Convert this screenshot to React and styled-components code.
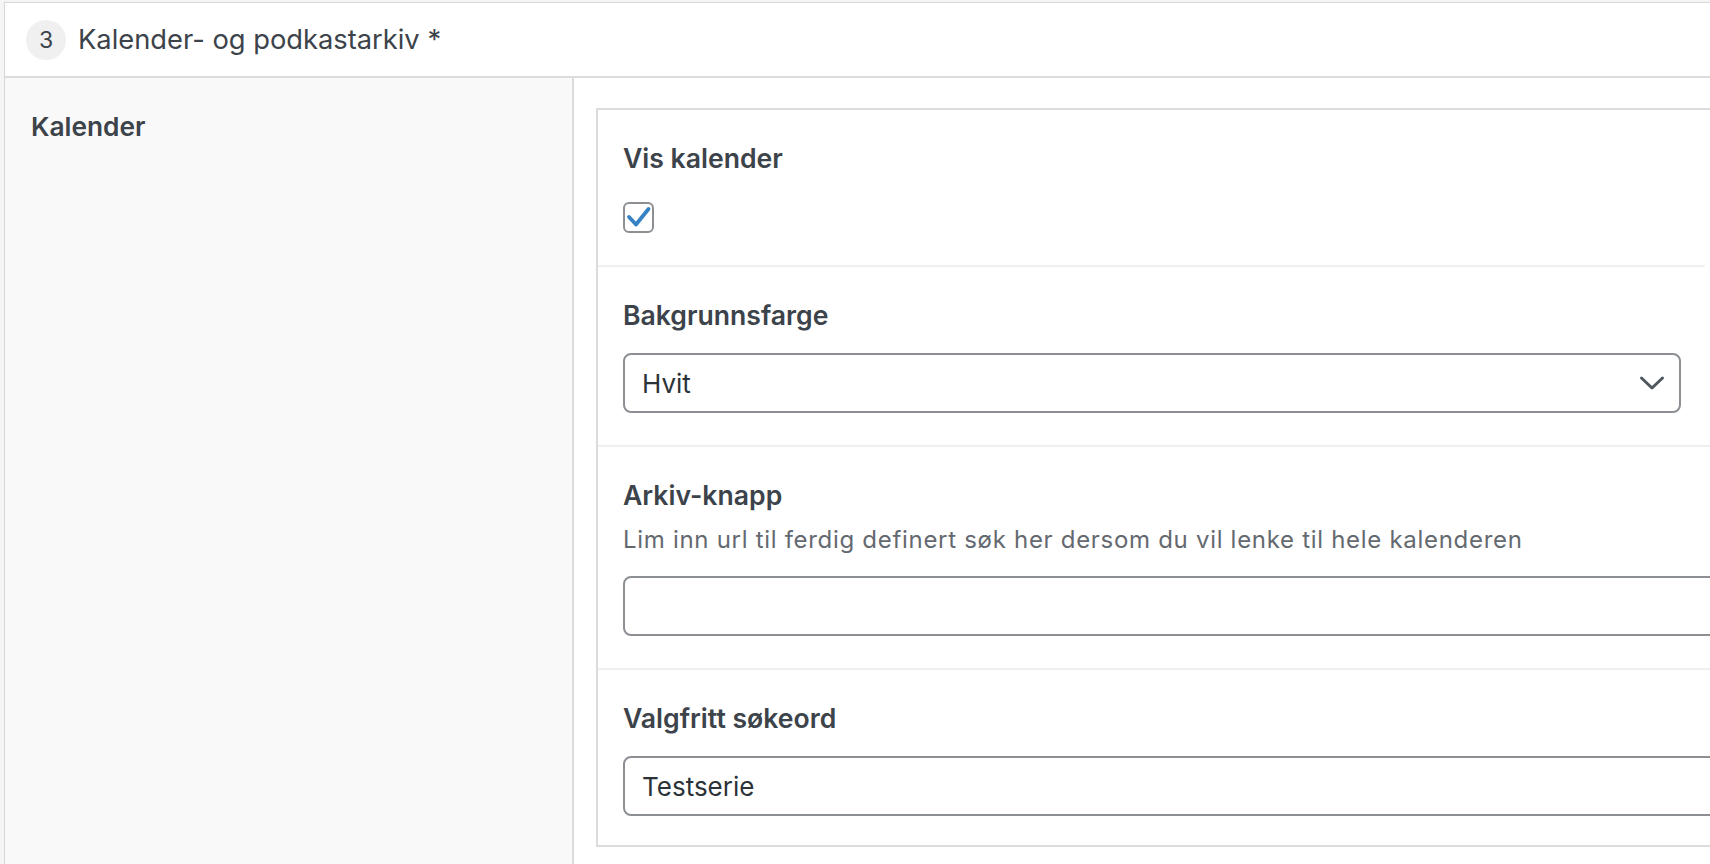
import React from "react";
import styled, { createGlobalStyle } from "styled-components";

const GlobalStyle = createGlobalStyle`
  html, body {
    margin: 0;
    padding: 0;
    background: #f5f5f6;
    overflow: hidden;
  }
  body {
    font-family: Inter, "Noto Sans", "Liberation Sans", sans-serif;
    color: #3c434a;
  }
  * { box-sizing: border-box; }
`;

const Frame = styled.div`
  margin: 2px 0 0 4px;
  min-height: calc(100vh - 2px);
  display: flex;
  flex-direction: column;
  background: #fff;
  border-top: 1px solid #d6d7d9;
  border-left: 1px solid #d6d7d9;
`;

const Header = styled.div`
  height: 75px;
  display: flex;
  align-items: center;
  gap: 12px;
  padding-left: 21px;
  border-bottom: 2px solid #dcdcde;
`;

const Badge = styled.span`
  width: 40px;
  height: 40px;
  border-radius: 50%;
  background: #f0f0f1;
  display: flex;
  align-items: center;
  justify-content: center;
  font-size: 23px;
  color: #3c434a;
`;

const Title = styled.h2`
  margin: 0;
  font-size: 27.3px;
  font-weight: 400;
  color: #3c434a;
`;

const Body = styled.div`
  flex: 1;
  display: grid;
  grid-template-columns: 569px 1fr;
`;

const Aside = styled.div`
  background: #f9f9f9;
  border-right: 2px solid #dcdcde;
  padding: 31px 26px;
`;

const SectionLabel = styled.div`
  font-size: 26.3px;
  line-height: 36px;
  font-weight: 600;
  color: #3c434a;
`;

const Main = styled.div`
  padding: 30px 0 16px 22px;
  overflow: hidden;
`;

const Panel = styled.div`
  border-top: 2px solid #dcdcde;
  border-left: 2px solid #dcdcde;
  border-bottom: 2px solid #dcdcde;
`;

const Field = styled.div`
  padding: 30px 0 ${(p) => (p.$last ? "29px" : "32px")} 25px;
  border-bottom: ${(p) => (p.$last ? "none" : "2px solid #f0f0f1")};
  margin-right: ${(p) => (p.$shortRule ? "5px" : "0")};
`;

const LabelWrap = styled.div`
  margin-bottom: 20px;
`;

const Label = styled.label`
  display: block;
  font-size: 26.6px;
  line-height: 36px;
  font-weight: 600;
  color: #3c434a;
`;

const Description = styled.p`
  margin: 11px 0 0;
  font-size: 24px;
  line-height: 32px;
  letter-spacing: 0.7px;
  color: #646970;
`;

const CheckRow = styled.div`
  padding-top: 6px;
  display: flex;
`;

const CheckBox = styled.span`
  width: 31px;
  height: 31px;
  border: 2px solid #8c8f94;
  border-radius: 6px;
  background: #fff;
  display: flex;
  align-items: center;
  justify-content: center;
`;

const SelectBox = styled.div`
  width: 1058px;
  height: 60px;
  border: 2px solid #8c8f94;
  border-radius: 8px;
  display: flex;
  align-items: center;
  justify-content: space-between;
  padding: 0 14px 0 17px;
  font-size: 26px;
  color: #2c3338;
`;

const TextInput = styled.div`
  width: calc(100% + 20px);
  height: 60px;
  border: 2px solid #8c8f94;
  border-radius: 8px;
  display: flex;
  align-items: center;
  padding: 0 17px;
  font-size: 26px;
  color: #2c3338;
`;

const Check = () => (
  <svg width="27" height="27" viewBox="0 0 27 27" fill="none">
    <path
      d="M4 13 L11 20.5 L23.5 5"
      stroke="#3582c4"
      strokeWidth="3.8"
      strokeLinecap="round"
      strokeLinejoin="round"
    />
  </svg>
);

const Chevron = () => (
  <svg width="26" height="16" viewBox="0 0 26 16" fill="none">
    <path
      d="M2.5 3 L13 13 L23.5 3"
      stroke="#50575e"
      strokeWidth="3"
      strokeLinecap="round"
      strokeLinejoin="round"
    />
  </svg>
);

export default function App() {
  return (
    <>
      <GlobalStyle />
      <Frame>
        <Header>
          <Badge>3</Badge>
          <Title>Kalender- og podkastarkiv *</Title>
        </Header>
        <Body>
          <Aside>
            <SectionLabel>Kalender</SectionLabel>
          </Aside>
          <Main>
            <Panel>
              <Field $shortRule>
                <LabelWrap>
                  <Label>Vis kalender</Label>
                </LabelWrap>
                <CheckRow>
                  <CheckBox>
                    <Check />
                  </CheckBox>
                </CheckRow>
              </Field>
              <Field>
                <LabelWrap>
                  <Label>Bakgrunnsfarge</Label>
                </LabelWrap>
                <SelectBox>
                  <span>Hvit</span>
                  <Chevron />
                </SelectBox>
              </Field>
              <Field>
                <LabelWrap>
                  <Label>Arkiv-knapp</Label>
                  <Description>
                    Lim inn url til ferdig definert søk her dersom du vil lenke til hele kalenderen
                  </Description>
                </LabelWrap>
                <TextInput />
              </Field>
              <Field $last>
                <LabelWrap>
                  <Label>Valgfritt søkeord</Label>
                </LabelWrap>
                <TextInput>Testserie</TextInput>
              </Field>
            </Panel>
          </Main>
        </Body>
      </Frame>
    </>
  );
}
